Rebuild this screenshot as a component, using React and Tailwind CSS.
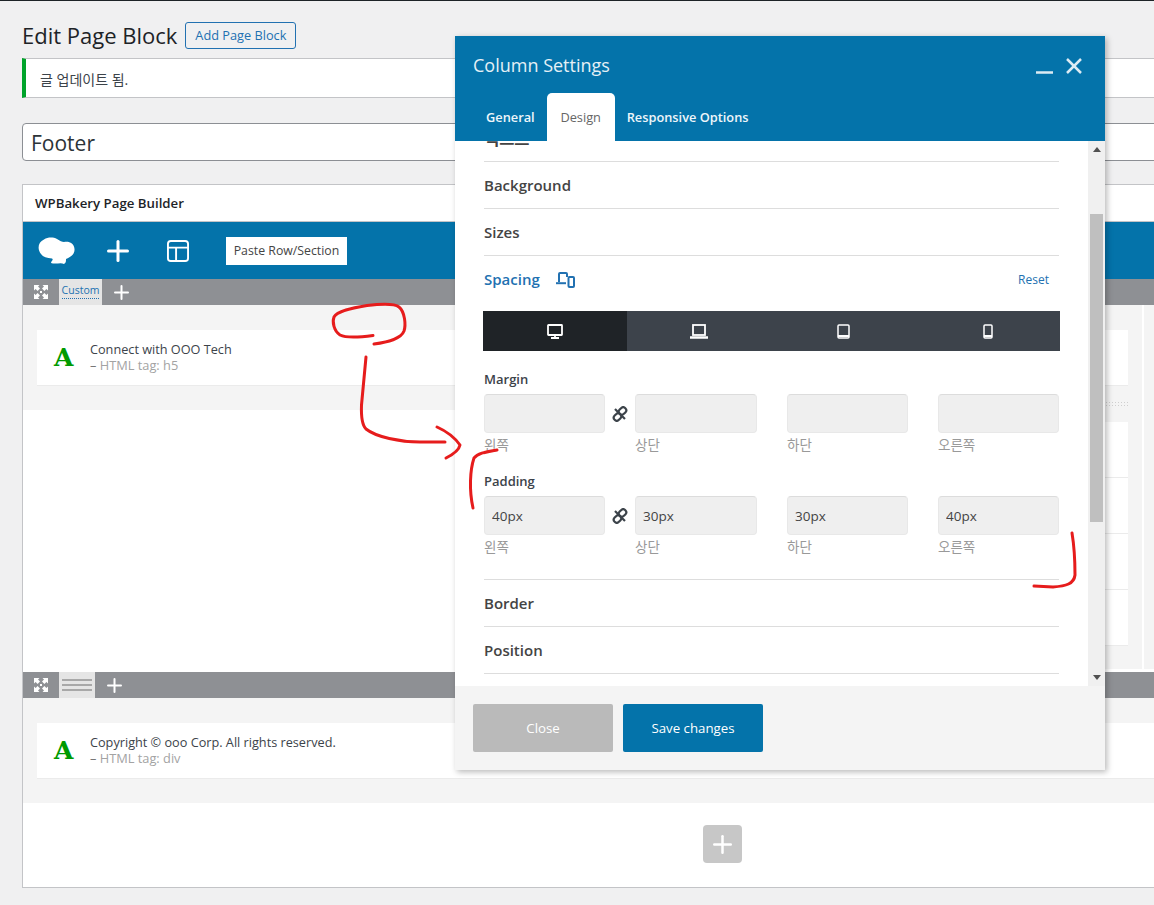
import React from 'react';

const ExpandIcon = () => (
  <svg width="14" height="14" viewBox="0 0 14 14" fill="#fff">
    <path d="M0 0h5.500L4 1.600l2 2L3.600 6l-2-2L0 5.500zM14 0v5.500L12.400 4l-2 2L8 3.600l2-2L8.500 0zM0 14V8.500L1.600 10l2-2L6 10.400l-2 2L5.500 14zM14 14H8.500L10 12.400l-2-2L10.400 8l2 2L14 8.500z" />
    <rect x="6" y="6" width="2" height="2" />
  </svg>
);

const PlusIcon = ({ size = 15, stroke = 2, color = '#fff' }) => (
  <svg width={size} height={size} viewBox={`0 0 ${size} ${size}`} stroke={color} strokeWidth={stroke} strokeLinecap="round">
    <line x1={size / 2} y1={stroke / 2} x2={size / 2} y2={size - stroke / 2} />
    <line x1={stroke / 2} y1={size / 2} x2={size - stroke / 2} y2={size / 2} />
  </svg>
);

const Card = ({ title, tag }) => (
  <div className="flex items-center h-[56px] bg-white border-b border-[#ebebeb] pl-[17px]">
    <span className="w-[36px] text-[25px] leading-none font-bold text-[#009a00] font-['DejaVu_Serif',serif]">A</span>
    <div className="leading-[16px] pb-[2px]">
      <div className="text-[12.700px] font-medium text-[#3c434a]">{title}</div>
      <div className="text-[12.800px] text-[#a3a3a3]"><span className="text-[#777]">–</span> HTML tag: {tag}</div>
    </div>
  </div>
);

const Field = ({ label, value = '', w = 'w-[121px]' }) => (
  <div className={w}>
    <input
      readOnly
      value={value}
      className="block w-full h-[39px] bg-[#efefef] border border-[#e8e8e8] border-t-[#dcdcdc] rounded-[4px] px-[7px] text-[13.500px] text-[#444] outline-none"
    />
    <div className="mt-[2px] h-[20px] leading-[20px] text-[13.500px] text-[#999]">{label}</div>
  </div>
);

const LinkOff = () => (
  <div className="w-[30px] h-[39px] flex items-center justify-center">
    <svg width="16" height="16" viewBox="0 0 16 16" fill="none" stroke="#3c434a" strokeWidth="2.200">
      <rect x="6.500" y="2" width="8" height="6" rx="3" transform="rotate(-45 10.500 5)" />
      <rect x="1.500" y="8" width="8" height="6" rx="3" transform="rotate(-45 5.500 11)" />
      <line x1="3" y1="3" x2="13" y2="13" />
    </svg>
  </div>
);

const SpacingBlock = ({ title, values }) => (
  <div className="h-[102px]">
    <div className="h-[20px] leading-[20px] text-[13px] font-semibold text-[#3c434a]">{title}</div>
    <div className="flex mt-[5px]">
      <Field label="왼쪽" value={values[0]} />
      <LinkOff />
      <Field label="상단" value={values[1]} w="w-[122px]" />
      <div className="w-[30px]" />
      <Field label="하단" value={values[2]} />
      <div className="w-[30px]" />
      <Field label="오른쪽" value={values[3]} />
    </div>
  </div>
);

const Section = ({ children }) => (
  <div className="flex items-center h-[47px] border-b border-[#ddd] text-[15px] font-semibold text-[#444]">{children}</div>
);

const Modal = () => (
  <div className="absolute left-[455px] top-[36px] w-[650px] h-[734px] flex flex-col shadow-[2px_2px_6px_rgba(0,0,0,0.28)]">
    <div className="h-[105px] bg-[#0473aa] relative flex flex-col justify-between">
      <div className="pl-[18px] pt-[16px] text-[18px] leading-[26px] text-[#e4f0f6]">Column Settings</div>
      <div className="absolute right-[22px] top-[21px] flex items-center">
        <svg width="50" height="18" viewBox="0 0 50 18" stroke="#dcebf3" strokeWidth="2.500">
          <line x1="3" y1="15.500" x2="20" y2="15.500" />
          <line x1="34" y1="2" x2="48" y2="16" />
          <line x1="48" y1="2" x2="34" y2="16" />
        </svg>
      </div>
      <div className="flex h-[48px] pl-[31px] gap-[12px] text-[12.800px] font-semibold text-[#eef6fa] items-center">
        <span className="pt-px">General</span>
        <span className="h-full w-[68px] pt-px flex items-center justify-center bg-white rounded-t-[5px] font-normal text-[#666]">Design</span>
        <span className="pt-px">Responsive Options</span>
      </div>
    </div>

    <div className="flex h-[545px] bg-white">
      <div className="flex-1 overflow-hidden">
        <div className="ml-[29px] w-[575px]">
          <div className="h-[21px] overflow-hidden border-b border-[#ddd]">
            <div className="-mt-[12px] text-[16.500px] leading-[20px] font-semibold text-[#444]">텍스트</div>
          </div>
          <Section>Background</Section>
          <Section>Sizes</Section>
          <div className="border-b border-[#ddd] pb-[6px]">
            <div className="flex items-center h-[47px]">
              <span className="text-[15px] font-semibold text-[#2271b1]">Spacing</span>
              <svg className="ml-[16px]" width="19" height="16" viewBox="0 0 19 16" fill="none" stroke="#2271b1" strokeWidth="2">
                <path d="M11 5V2a1 1 0 0 0-1-1H4a1 1 0 0 0-1 1v8" />
                <path d="M0 11.200h10" />
                <rect x="12.500" y="5" width="5.500" height="10" rx="1" />
              </svg>
              <span className="ml-auto pr-[10px] text-[12px] text-[#2271b1]">Reset</span>
            </div>
            <div className="mt-[8px] -ml-px w-[577px] h-[40px] flex text-white">
              <div className="w-[144px] flex items-center justify-center bg-[#1f2327]">
                <svg width="16" height="15" viewBox="0 0 16 15" fill="none" stroke="#fff" strokeWidth="1.800">
                  <rect x="1" y="1" width="14" height="10" rx="0.500" />
                  <path d="M8 11v2.500M4 14h8" />
                </svg>
              </div>
              <div className="w-[144px] flex items-center justify-center bg-[#3d434b]">
                <svg width="18" height="15" viewBox="0 0 18 15" fill="none" stroke="#fff" strokeWidth="1.800">
                  <rect x="3" y="1" width="12" height="10" />
                  <path d="M0 13.500h18" strokeWidth="2.500" />
                </svg>
              </div>
              <div className="w-[144px] flex items-center justify-center bg-[#3d434b]">
                <svg width="13" height="15" viewBox="0 0 13 15" fill="none" stroke="#fff" strokeWidth="1.500">
                  <rect x="1" y="1" width="11" height="13" rx="1" />
                  <path d="M1 12h11" strokeWidth="2" />
                </svg>
              </div>
              <div className="w-[145px] flex items-center justify-center bg-[#3d434b]">
                <svg width="10" height="15" viewBox="0 0 10 15" fill="none" stroke="#fff" strokeWidth="1.500">
                  <rect x="1" y="1" width="8" height="13" rx="1" />
                  <path d="M1 12h8" strokeWidth="2" />
                </svg>
              </div>
            </div>
            <div className="mt-[18px]">
              <SpacingBlock title="Margin" values={['', '', '', '']} />
              <SpacingBlock title="Padding" values={['40px', '30px', '30px', '40px']} />
            </div>
          </div>
          <Section>Border</Section>
          <Section>Position</Section>
        </div>
      </div>
      <div className="w-[17px] bg-[#f0f0f0] flex flex-col items-center pt-[6px]">
        <svg width="8" height="5" viewBox="0 0 8 5" fill="#505050"><path d="M4 0l4 5H0z" /></svg>
        <div className="mt-[62px] w-[13px] h-[308px] bg-[#bfbfbf]" />
        <svg className="mt-auto mb-[6px]" width="8" height="5" viewBox="0 0 8 5" fill="#505050"><path d="M0 0h8L4 5z" /></svg>
      </div>
    </div>

    <div className="h-[84px] bg-[#f4f4f4] flex gap-[10px] pl-[18px] pt-[18px] text-[13.250px] text-white">
      <button className="w-[140px] h-[48px] pt-px rounded-[2px] bg-[#bababa]">Close</button>
      <button className="w-[140px] h-[48px] pt-px rounded-[2px] bg-[#0473aa]">Save changes</button>
    </div>
  </div>
);

const Annotations = () => (
  <svg className="absolute left-0 top-0 pointer-events-none" width="1154" height="905" fill="none" stroke="#e61c1c" strokeWidth="3" strokeLinecap="round" strokeLinejoin="round">
    <path d="M373 335.500C362 337 346 338 340 335C334 331 332 322 334 317C337 311 352 308 367 305.500C380 304 394 303 399 307C405 312 406 325 404 331C401 339 388 342 374 344" />
    <path d="M366 357L361.500 405C361 418 362 425 366 429C376 437 400 442 420 442L445 442" />
    <path d="M437 427C446 431 455 438 460 445C459 450 452 455 446 458" />
    <path d="M497 450C486 452 478 453 474 458C470 470 469 490 473 508" />
    <path d="M1072 533C1074 545 1075 565 1075 575C1074 584 1066 586 1053 587L1034 586" />
  </svg>
);

export default function App() {
  return (
    <div className="relative h-[905px] overflow-hidden bg-[#f0f0f1] text-[#1d2327] font-['Open_Sans','Noto_Sans_CJK_KR',sans-serif]">
      <div className="h-px bg-[#1d2327]" />
      <div className="ml-[22px] w-[1400px]">
        <div className="mt-[21px] h-[27px] flex items-center gap-[8px]">
          <h1 className="pb-[2px] text-[22px] leading-none text-[#1d2327]">Edit Page Block</h1>
          <button className="h-[27px] w-[111px] border border-[#2271b1] rounded-[3px] text-[12.750px] text-[#2271b1]">Add Page Block</button>
        </div>

        <div className="mt-[9px] h-[40px] flex items-center bg-white border border-[#c3c4c7] border-l-4 border-l-[#00a32a] pl-[14px] pt-[2px] text-[14px] text-[#3c434a]">글 업데이트 됨.</div>

        <div className="mt-[25px] h-[38px] flex items-center bg-white border border-[#8c8f94] rounded-[4px] pl-[8px] pt-[3px] text-[21px] text-[#2c3338]">Footer</div>

        <div className="mt-[23px] bg-white border border-[#c3c4c7]">
          <div className="h-[37px] pt-px flex items-center border-b border-[#c3c4c7] pl-[12px] text-[13.250px] font-semibold">WPBakery Page Builder</div>

          <div className="h-[57px] flex items-center bg-[#0473aa] pl-[15px]">
            <svg width="37" height="28" viewBox="0 0 37 28" fill="#fff">
              <path d="M3 17C-1 12 0 5 6 2.500C10 0 15 0 19 2C22 4 24 5 26 5C31 4 36 6 36.500 12C37 17 33 20 28 22C28 24 28 26 26 27C23 25 18 27.500 13 26C13 24 16 23 14 21.500C9 21 5 20 3 17Z" />
            </svg>
            <div className="ml-[32px]"><PlusIcon size={22} stroke={3} /></div>
            <svg className="ml-[38px]" width="22" height="22" viewBox="0 0 23 23" fill="none" stroke="#fff" strokeWidth="2">
              <rect x="1" y="1" width="21" height="21" rx="3" />
              <path d="M1 8h21M9.500 8v14" />
            </svg>
            <div className="ml-[37px] w-[121px] h-[28px] pt-px flex items-center justify-center bg-white text-[12.300px] text-[#444]">Paste Row/Section</div>
          </div>

          <div className="h-[26px] flex bg-[#8e9094]">
            <div className="w-[36px] flex items-center justify-center"><ExpandIcon /></div>
            <div className="w-[43px] bg-[#e5e5e5] flex items-start justify-center pt-[3px]">
              <span className="text-[10.500px] leading-[16px] text-[#2271b1] border-b border-dotted border-[#2271b1]">Custom</span>
            </div>
            <div className="ml-[12px] flex items-center"><PlusIcon size={15} /></div>
          </div>

          <div className="flex items-start h-[367px]">
            <div className="w-[677px] h-[105px] bg-[#f4f4f4] pt-[25px] pl-[14px]">
              <Card title="Connect with OOO Tech" tag="h5" />
            </div>
            <div className="w-[442px] h-[364px] bg-[#f4f4f4] pt-[25px] pr-[14px]">
              <div className="h-[56px] bg-white border-b border-[#ebebeb]" />
              <div className="mt-[15px] h-[6px] bg-[radial-gradient(#cfcfcf_1px,transparent_1px)] bg-[length:3px_3px]" />
              <div className="mt-[15px]">
                <div className="h-[56px] bg-white border-b border-[#ebebeb]" />
                <div className="h-[56px] bg-white border-b border-[#ebebeb]" />
                <div className="h-[56px] bg-white border-b border-[#ebebeb]" />
                <div className="h-[56px] bg-white border-b border-[#ebebeb]" />
              </div>
            </div>
            <div className="ml-[2px] flex-1 h-[364px] bg-[#f4f4f4]" />
          </div>

          <div className="h-[26px] flex bg-[#8e9094]">
            <div className="w-[36px] flex items-center justify-center"><ExpandIcon /></div>
            <div className="w-[36px] bg-[#e5e5e5] flex flex-col justify-center gap-[3px] px-[3px]">
              <div className="h-[2px] bg-[#a8a8a8]" />
              <div className="h-[2px] bg-[#a8a8a8]" />
              <div className="h-[2px] bg-[#a8a8a8]" />
            </div>
            <div className="ml-[12px] flex items-center"><PlusIcon size={15} /></div>
          </div>

          <div className="h-[105px] bg-[#f4f4f4] pt-[25px] pl-[14px]">
            <Card title="Copyright © ooo Corp. All rights reserved." tag="div" />
          </div>

          <div className="h-[84px] pt-[22px] flex justify-center">
            <div className="w-[39px] h-[38px] flex items-center justify-center rounded-[4px] bg-[#c7c7c7]">
              <PlusIcon size={19} stroke={2.500} />
            </div>
          </div>
        </div>
      </div>

      <Modal />
      <Annotations />
    </div>
  );
}
